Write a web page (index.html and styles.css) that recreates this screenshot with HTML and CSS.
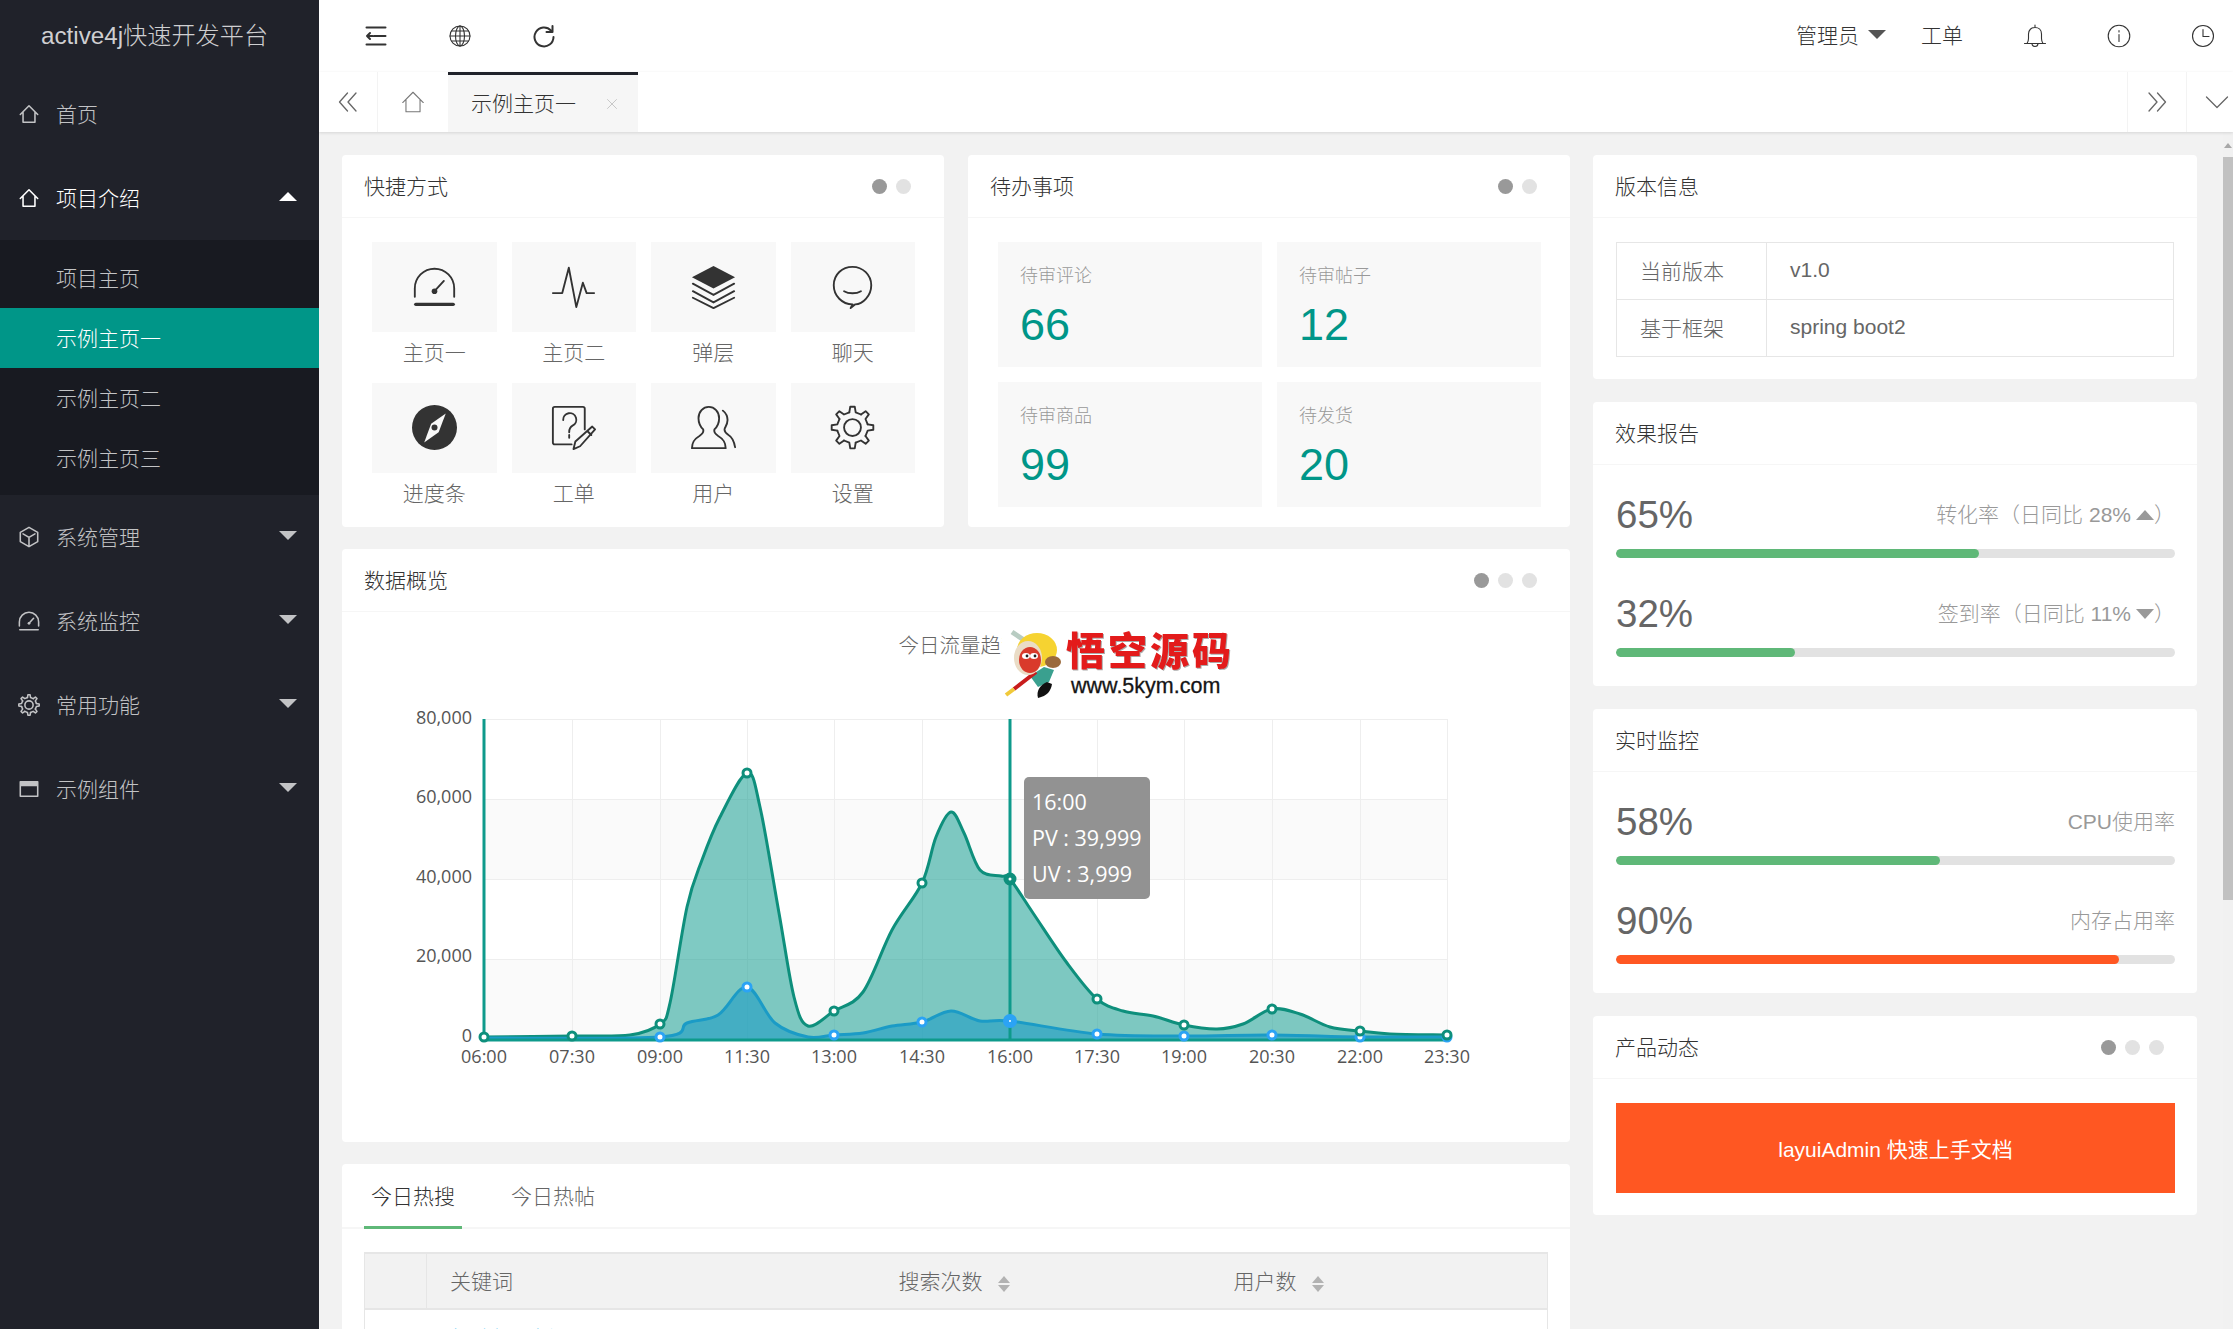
FILE: index.html
```html
<!DOCTYPE html>
<html lang="zh-CN">
<head>
<meta charset="utf-8">
<title>active4j快速开发平台</title>
<link rel="stylesheet" href="styles.css">
</head>
<body>
<svg class="defs" width="0" height="0" aria-hidden="true">
  <symbol id="i-home" viewBox="0 0 24 24"><path d="M2.500 12.500 12 3l9.500 9.500M5.500 10v11h13V10"/></symbol>
  <symbol id="i-fold" viewBox="0 0 24 24"><path d="M2.500 3.500h19M10 12h11.500M2.500 20.500h19M8.500 12H3M6 9 3 12l3 3"/></symbol>
  <symbol id="i-globe" viewBox="0 0 24 24"><circle cx="12" cy="12" r="10"/><ellipse cx="12" cy="12" rx="4.500" ry="10"/><path d="M2 12h20M12 2v20M3.500 7h17M3.500 17h17"/></symbol>
  <symbol id="i-refresh" viewBox="0 0 24 24"><path d="M19 6.500A9.500 9.500 0 1 0 21.500 13"/><path d="M20.500 2v6h-6" /></symbol>
  <symbol id="i-dleft" viewBox="0 0 24 24"><path d="M11.500 3 3.500 12l8 9M20 3l-8 9 8 9"/></symbol>
  <symbol id="i-dright" viewBox="0 0 24 24"><path d="M4 3l8 9-8 9M12.500 3l8 9-8 9"/></symbol>
  <symbol id="i-chev" viewBox="0 0 24 24"><path d="M1.500 7 12 17.500 22.500 7"/></symbol>
  <symbol id="i-close" viewBox="0 0 24 24"><path d="M3 3l18 18M21 3 3 21"/></symbol>
  <symbol id="i-bell" viewBox="0 0 24 24"><path d="M12 1v2.500M1.500 19.500h21M4 19.500c1-1.500 1.500-3 1.500-5V10c0-4 2.800-6.500 6.500-6.500s6.500 2.500 6.500 6.500v4.500c0 2 .5 3.500 1.500 5M9 19.500a3 3 0 0 0 6 0"/></symbol>
  <symbol id="i-info" viewBox="0 0 24 24"><circle cx="12" cy="12" r="10.800"/><path d="M12 10.500v7M12 6.500v1.500"/></symbol>
  <symbol id="i-clock" viewBox="0 0 24 24"><circle cx="12" cy="12" r="10.500"/><path d="M12 5.500v7h6"/></symbol>
  <symbol id="i-gauge" viewBox="0 0 24 24"><path d="M1.500 17.500v-4.500a10.500 10.500 0 0 1 21 0v4.500"/><path class="thick" d="M2 21.500h20"/><path d="M12 14.500 17 9"/><circle class="solid" cx="12" cy="14.500" r="1.500"/></symbol>
  <symbol id="i-pulse" viewBox="0 0 24 24"><path d="M1 15.500h5L9.500 2 13.500 23l3.500-13 2 5.500h4"/></symbol>
  <symbol id="i-layers" viewBox="0 0 24 24"><path class="solid" d="M12 1 23.500 7 12 13 .5 7z"/><path d="M1 10.500l11 6 11-6M1 14.500l11 6 11-6M1 18l11 5.500L23 18"/></symbol>
  <symbol id="i-chat" viewBox="0 0 24 24"><path d="M12 21.500c-5.500 0-10-4.500-10-10.200S6.500 1.500 12 1.500s10 4.300 10 9.800-4.500 10.200-8.500 10.200L11 23.500z"/><path d="M7.500 14.500c2.500 1.500 6.500 1.500 9 0"/></symbol>
  <symbol id="i-compass" viewBox="0 0 24 24"><circle class="solid" cx="12" cy="12" r="12"/><path class="white" d="M18 4.500 14.200 14.500 6.500 20 10.200 10z"/><circle class="solid" cx="12" cy="12" r="1.600"/></symbol>
  <symbol id="i-form" viewBox="0 0 24 24"><path d="M18 13V2a1 1 0 0 0-1-1H2a1 1 0 0 0-1 1v18a1 1 0 0 0 1 1h9"/><path d="M6.500 8a3.500 3.500 0 1 1 5 3c-1.500.8-1.800 1.700-1.800 3.500M9.700 16v1.500"/><path d="M22 11.500l1.500 1.500-8 9-3.500 1.500 1-4zM19.500 14l2 2"/></symbol>
  <symbol id="i-users" viewBox="0 0 24 24"><path d="M9.500 1C6.500 1 4 3.500 4 7c0 2.500 1 4.500 2.500 6 .5 1.500-.5 2.500-2 3.500C2 18 .5 19.500.5 23h18c0-3.500-1.500-5-4-6.500-1.500-1-2.500-2-2-3.500 1.500-1.500 2.500-3.500 2.500-6 0-3.500-2.500-6-5.500-6z"/><path d="M17 3c1.500 1.200 2.500 3 2.500 5s-1 3.500-1.500 4.500c-.5 1.500.5 2.500 2 3.500 2 1.200 3 3.500 3.500 6.500"/></symbol>
  <symbol id="i-gear" viewBox="0 0 24 24">
    <g id="teeth">
      <path d="M10.300 3.900 10.800 .9h2.400l.5 3 2.830 1.170"/>
      <path transform="rotate(45 12 12)" d="M10.300 3.900 10.800 .9h2.400l.5 3 2.830 1.170"/>
      <path transform="rotate(90 12 12)" d="M10.300 3.900 10.800 .9h2.400l.5 3 2.830 1.170"/>
      <path transform="rotate(135 12 12)" d="M10.300 3.900 10.800 .9h2.400l.5 3 2.830 1.170"/>
      <path transform="rotate(180 12 12)" d="M10.300 3.900 10.800 .9h2.400l.5 3 2.830 1.170"/>
      <path transform="rotate(225 12 12)" d="M10.300 3.900 10.800 .9h2.400l.5 3 2.830 1.170"/>
      <path transform="rotate(270 12 12)" d="M10.300 3.900 10.800 .9h2.400l.5 3 2.830 1.170"/>
      <path transform="rotate(315 12 12)" d="M10.300 3.900 10.800 .9h2.400l.5 3 2.830 1.170"/>
    </g>
    <circle cx="12" cy="12" r="4.500"/>
  </symbol>
  <symbol id="i-cube" viewBox="0 0 24 24"><path d="M12 1.500 21.500 7v10L12 22.500 2.500 17V7zM5.500 8.500 12 12.500l6.500-4M12 12.500V21"/></symbol>
  <symbol id="i-window" viewBox="0 0 24 24"><path d="M2.500 4h19v16h-19z"/><rect class="solid" x="2.500" y="4" width="19" height="5"/></symbol>
</svg>

<div class="app">
  <aside class="sidebar">
    <div class="logo">active4j快速开发平台</div>
    <nav>
      <a class="nav-item"><svg class="ico nav-ico"><use href="#i-home"/></svg>首页</a>
      <a class="nav-item is-open"><svg class="ico nav-ico"><use href="#i-home"/></svg>项目介绍<span class="caret caret-up"></span></a>
      <div class="subnav">
        <a class="sub-item">项目主页</a>
        <a class="sub-item is-active">示例主页一</a>
        <a class="sub-item">示例主页二</a>
        <a class="sub-item">示例主页三</a>
      </div>
      <a class="nav-item"><svg class="ico nav-ico"><use href="#i-cube"/></svg>系统管理<span class="caret"></span></a>
      <a class="nav-item"><svg class="ico nav-ico"><use href="#i-gauge"/></svg>系统监控<span class="caret"></span></a>
      <a class="nav-item"><svg class="ico nav-ico"><use href="#i-gear"/></svg>常用功能<span class="caret"></span></a>
      <a class="nav-item"><svg class="ico nav-ico"><use href="#i-window"/></svg>示例组件<span class="caret"></span></a>
    </nav>
  </aside>

  <div class="main">
    <header class="topbar">
      <div class="top-left">
        <svg class="ico top-ico bold"><use href="#i-fold"/></svg>
        <svg class="ico top-ico"><use href="#i-globe"/></svg>
        <svg class="ico top-ico bold"><use href="#i-refresh"/></svg>
      </div>
      <div class="top-right">
        <span class="top-user">管理员<span class="caret caret-dark"></span></span>
        <span class="top-link">工单</span>
        <svg class="ico top-ico"><use href="#i-bell"/></svg>
        <svg class="ico top-ico"><use href="#i-info"/></svg>
        <svg class="ico top-ico"><use href="#i-clock"/></svg>
      </div>
    </header>

    <div class="tabbar">
      <span class="tab-btn tab-prev"><svg class="ico tab-ico"><use href="#i-dleft"/></svg></span>
      <span class="tab-home"><svg class="ico home-ico"><use href="#i-home"/></svg></span>
      <span class="tab-active">示例主页一<svg class="ico close-ico"><use href="#i-close"/></svg></span>
      <span class="tab-space"></span>
      <span class="tab-btn tab-next"><svg class="ico tab-ico"><use href="#i-dright"/></svg></span>
      <span class="tab-btn tab-more"><svg class="ico tab-ico"><use href="#i-chev"/></svg></span>
    </div>

    <div class="body-wrap">
      <main class="content">
        <div class="col-left">
          <div class="row-top">
            <section class="card">
              <div class="card-head">快捷方式<span class="dots"><i class="dot on"></i><i class="dot"></i></span></div>
              <div class="shortcuts">
                <a class="shortcut"><span class="tile"><svg class="ico big-ico"><use href="#i-gauge"/></svg></span>主页一</a>
                <a class="shortcut"><span class="tile"><svg class="ico big-ico"><use href="#i-pulse"/></svg></span>主页二</a>
                <a class="shortcut"><span class="tile"><svg class="ico big-ico"><use href="#i-layers"/></svg></span>弹层</a>
                <a class="shortcut"><span class="tile"><svg class="ico big-ico"><use href="#i-chat"/></svg></span>聊天</a>
                <a class="shortcut"><span class="tile"><svg class="ico big-ico"><use href="#i-compass"/></svg></span>进度条</a>
                <a class="shortcut"><span class="tile"><svg class="ico big-ico"><use href="#i-form"/></svg></span>工单</a>
                <a class="shortcut"><span class="tile"><svg class="ico big-ico"><use href="#i-users"/></svg></span>用户</a>
                <a class="shortcut"><span class="tile"><svg class="ico big-ico"><use href="#i-gear"/></svg></span>设置</a>
              </div>
            </section>
            <section class="card">
              <div class="card-head">待办事项<span class="dots"><i class="dot on"></i><i class="dot"></i></span></div>
              <div class="todos">
                <div class="todo"><h3>待审评论</h3><p>66</p></div>
                <div class="todo"><h3>待审帖子</h3><p>12</p></div>
                <div class="todo"><h3>待审商品</h3><p>99</p></div>
                <div class="todo"><h3>待发货</h3><p>20</p></div>
              </div>
            </section>
          </div>

          <section class="card">
            <div class="card-head">数据概览<span class="dots"><i class="dot on"></i><i class="dot"></i><i class="dot"></i></span></div>
            <svg class="chart" viewBox="342 612 1228 530" width="1228" height="530">
              <rect class="band" x="484" y="799" width="963" height="80"/>
              <rect class="band" x="484" y="959" width="963" height="80"/>
              <path class="grid" d="M484 719.500H1447M484 799.500H1447M484 879.500H1447M484 959.500H1447M572.500 719V1040M660.500 719V1040M747.500 719V1040M834.500 719V1040M922.500 719V1040M1010.500 719V1040M1097.500 719V1040M1184.500 719V1040M1272.500 719V1040M1360.500 719V1040M1447.500 719V1040"/>
              <text class="chart-title" x="960" y="653" text-anchor="middle">今日流量趋势</text>

              <path id="pv-area" class="pv-area"/>
              <path id="uv-area" class="uv-area"/>
              <path id="pv-line" class="pv-line"/>
              <path id="uv-line" class="uv-line"/>
              <path class="axis" d="M484 719V1040H1447M1010 719V1040"/>

              <g class="uv-pts">
                <circle cx="660" cy="1037" r="4"/><circle cx="747" cy="987" r="4"/><circle cx="834" cy="1035" r="4"/><circle cx="922" cy="1022" r="4"/><circle cx="1097" cy="1034" r="4"/><circle cx="1184" cy="1036" r="4"/><circle cx="1272" cy="1035" r="4"/><circle cx="1360" cy="1037" r="4"/><circle cx="1447" cy="1037" r="4"/>
              </g>
              <g class="pv-pts">
                <circle cx="484" cy="1037" r="4"/><circle cx="572" cy="1036" r="4"/><circle cx="660" cy="1024" r="4"/><circle cx="747" cy="773" r="4"/><circle cx="834" cy="1011" r="4"/><circle cx="922" cy="883" r="4"/><circle cx="1097" cy="999" r="4"/><circle cx="1184" cy="1025" r="4"/><circle cx="1272" cy="1009" r="4"/><circle cx="1360" cy="1031" r="4"/><circle cx="1447" cy="1035" r="4"/>
              </g>
              <circle class="pv-hot" cx="1010" cy="879" r="4"/>
              <circle class="uv-hot" cx="1010" cy="1021" r="4"/>

              <g class="tick-y">
                <text x="472" y="724">80,000</text><text x="472" y="803">60,000</text><text x="472" y="883">40,000</text><text x="472" y="962">20,000</text><text x="472" y="1042">0</text>
              </g>
              <g class="tick-x">
                <text x="484" y="1063">06:00</text><text x="572" y="1063">07:30</text><text x="660" y="1063">09:00</text><text x="747" y="1063">11:30</text><text x="834" y="1063">13:00</text><text x="922" y="1063">14:30</text><text x="1010" y="1063">16:00</text><text x="1097" y="1063">17:30</text><text x="1184" y="1063">19:00</text><text x="1272" y="1063">20:30</text><text x="1360" y="1063">22:00</text><text x="1447" y="1063">23:30</text>
              </g>

              <rect class="tip-bg" x="1024" y="777" width="126" height="122" rx="5"/>
              <g class="tip-text">
                <text x="1032" y="810">16:00</text><text x="1032" y="846">PV : 39,999</text><text x="1032" y="882">UV : 3,999</text>
              </g>

              <rect class="wm-bg" x="1002" y="626" width="234" height="76"/>
              <g class="wm-monkey">
                <path class="wm-band" d="M1012 632 1030 644"/>
                <ellipse class="wm-cap" cx="1037" cy="650" rx="20" ry="17"/>
                <ellipse class="wm-ear" cx="1053" cy="662" rx="8" ry="6"/>
                <path class="wm-body" d="M1030 676l14-9 10 3-5 12-11 5z"/>
                <path class="wm-boot" d="M1038 698c-2-7 2-13 9-16l5 2c-1 7-5 12-14 14z"/>
                <path class="wm-staff" d="M1014 689 1036 672"/>
                <path class="wm-tip" d="M1006 695 1014 689"/>
                <ellipse class="wm-skin" cx="1028" cy="658" rx="14" ry="17"/>
                <ellipse class="wm-face" cx="1030" cy="660" rx="11" ry="13"/>
                <ellipse class="wm-eye" cx="1026" cy="656" rx="4" ry="3"/>
                <ellipse class="wm-eye" cx="1034" cy="656" rx="4" ry="3"/>
                <circle class="wm-dot" cx="1027" cy="656" r="1.400"/>
                <circle class="wm-dot" cx="1035" cy="656" r="1.400"/>
              </g>
              <text class="wm-cn" x="1066" y="665">悟空源码</text>
              <text class="wm-en" x="1071" y="693">www.5kym.com</text>
            </svg>
          </section>

          <section class="card">
            <div class="hot-tabs"><span class="hot-tab is-on">今日热搜</span><span class="hot-tab">今日热帖</span></div>
            <div class="hot-body">
              <table class="hot-table">
                <thead>
                  <tr>
                    <th class="c-idx"></th>
                    <th class="c-key">关键词</th>
                    <th class="c-num">搜索次数<span class="sort"></span></th>
                    <th>用户数<span class="sort"></span></th>
                  </tr>
                </thead>
                <tbody>
                  <tr><td></td><td class="link">胡歌新剧播</td><td></td><td></td></tr>
                </tbody>
              </table>
            </div>
          </section>
        </div>

        <div class="col-right">
          <section class="card">
            <div class="card-head">版本信息</div>
            <div class="ver-body">
              <table class="ver-table">
                <tr><td class="ver-k">当前版本</td><td>v1.0</td></tr>
                <tr><td class="ver-k">基于框架</td><td>spring boot2</td></tr>
              </table>
            </div>
          </section>
          <section class="card">
            <div class="card-head">效果报告</div>
            <div class="meters">
              <div class="meter">
                <div class="meter-top"><b>65%</b><span>转化率（日同比 28%<i class="tri tri-up"></i>）</span></div>
                <div class="bar"><div class="fill fill-green" style="width:65%"></div></div>
              </div>
              <div class="meter">
                <div class="meter-top"><b>32%</b><span>签到率（日同比 11%<i class="tri tri-down"></i>）</span></div>
                <div class="bar"><div class="fill fill-green" style="width:32%"></div></div>
              </div>
            </div>
          </section>
          <section class="card">
            <div class="card-head">实时监控</div>
            <div class="meters">
              <div class="meter">
                <div class="meter-top"><b>58%</b><span>CPU使用率</span></div>
                <div class="bar"><div class="fill fill-green" style="width:58%"></div></div>
              </div>
              <div class="meter">
                <div class="meter-top"><b>90%</b><span>内存占用率</span></div>
                <div class="bar"><div class="fill fill-red" style="width:90%"></div></div>
              </div>
            </div>
          </section>
          <section class="card">
            <div class="card-head">产品动态<span class="dots"><i class="dot on"></i><i class="dot"></i><i class="dot"></i></span></div>
            <div class="news"><a class="news-banner">layuiAdmin 快速上手文档</a></div>
          </section>
        </div>
      </main>
      <div class="scrollbar"><span class="scroll-up"></span><span class="scroll-thumb"></span></div>
    </div>
  </div>
</div>
<script src="chart.js"></script>
</body>
</html>
```

FILE: styles.css
```css
* { box-sizing: border-box; }
html, body { margin: 0; height: 100%; overflow: hidden; }
body {
  font-family: "Liberation Sans", "Noto Sans CJK SC", sans-serif;
  font-size: 21px;
  font-weight: 300;
  color: #666;
  background: #f2f2f2;
}
.defs { position: absolute; }

.ico { fill: none; stroke: currentColor; stroke-width: 1.4; stroke-linejoin: round; stroke-linecap: round; display: block; flex: none; }
.solid { fill: currentColor; stroke: none; }
.white { fill: #f8f8f8; stroke: none; }
.thick { stroke-width: 1.8; }

.app { display: flex; height: 1329px; }

/* sidebar */
.sidebar { width: 319px; flex: none; background: #20222a; color: #c2c3c5; }
.logo { height: 72px; padding: 0 0 5px 41px; display: flex; align-items: center; font-size: 24.2px; color: #cfcfd1; }
.nav-item { height: 84px; display: flex; align-items: center; padding: 0 0 3px 18px; }
.nav-item.is-open { color: #fff; }
.nav-ico { width: 22px; height: 22px; margin: 3px 16px 0 0; stroke-width: 1.7; }
.caret { width: 0; height: 0; border: 9px solid transparent; border-top: 9px solid #c2c3c5; border-bottom: 0; margin-left: auto; margin-right: 22px; }
.caret-up { border-top: 0; border-bottom: 9px solid #fff; }
.subnav { background: #181a21; padding: 8px 0 7px; }
.sub-item { display: flex; align-items: center; height: 60px; padding: 0 0 3px 56px; }
.sub-item.is-active { background: #009688; color: #fff; }

/* header */
.main { flex: 1; min-width: 0; display: flex; flex-direction: column; }
.topbar { height: 72px; flex: none; background: #fff; display: flex; justify-content: space-between; align-items: center; color: #333; }
.top-left { display: flex; gap: 60px; padding-left: 45px; }
.top-right { display: flex; align-items: center; gap: 60px; padding-right: 18px; }
.top-ico { width: 24px; height: 24px; stroke-width: 1.1; }
.top-ico.bold { stroke-width: 2; }
.top-user { display: flex; align-items: center; padding-bottom: 4px; margin-right: -25px; }
.caret-dark { border-top-color: #555; margin: 0 0 0 9px; }
.top-link { padding-bottom: 4px; }

.tabbar { height: 60px; flex: none; background: #fff; display: flex; box-shadow: 0 1px 3px rgba(0,0,0,.12); position: relative; }
.tab-btn { display: flex; align-items: center; justify-content: center; color: #666; }
.tab-prev { width: 59px; border-right: 1px solid #f3f3f3; }
.tab-next { width: 59px; border-left: 1px solid #f3f3f3; }
.tab-more { width: 47px; border-left: 1px solid #f3f3f3; padding-left: 13px; }
.tab-ico { width: 24px; height: 24px; stroke-width: 1.3; }
.tab-home { width: 70px; display: flex; align-items: center; justify-content: center; color: #777; }
.home-ico { width: 26px; height: 26px; stroke-width: 1; }
.tab-active { width: 190px; background: #f6f6f6; border-top: 3px solid #20222a; padding: 0 0 4px 23px; display: flex; align-items: center; color: #333; }
.close-ico { width: 12px; height: 12px; margin-left: 30px; color: #c8c8c8; stroke-width: 2; margin-top: 4px; }
.tab-space { flex: 1; }

/* content */
.body-wrap { flex: 1; min-height: 0; display: flex; }
.content { flex: 1; min-width: 0; overflow: hidden; padding: 23px 26px 0 23px; display: grid; grid-template-columns: 1228px 604px; gap: 23px; align-items: start; }
.col-left { display: flex; flex-direction: column; gap: 22px; }
.col-right { display: flex; flex-direction: column; gap: 23px; }
.row-top { display: grid; grid-template-columns: 602px 602px; gap: 24px; }
.card { background: #fff; border-radius: 4px; }
.card-head { height: 63px; padding: 0 33px 2px 22px; display: flex; align-items: center; justify-content: space-between; color: #333; border-bottom: 1px solid #f6f6f6; }
.dots { display: flex; gap: 9px; margin-top: 2px; }
.dot { width: 15px; height: 15px; border-radius: 50%; background: #e2e2e2; }
.dot.on { background: #999; }

.shortcuts { display: grid; grid-template-columns: repeat(4, 1fr); column-gap: 15px; padding: 24px 29px 3px 30px; }
.shortcut { height: 141px; display: flex; flex-direction: column; align-items: center; }
.tile { width: 100%; height: 90px; background: #f8f8f8; display: flex; align-items: center; justify-content: center; color: #333; margin-bottom: 4px; }
.big-ico { width: 45px; height: 45px; stroke-width: 1; margin-top: -2px; }

.todos { display: grid; grid-template-columns: 1fr 1fr; gap: 15px; padding: 24px 29px 20px 30px; }
.todo { height: 125px; background: #f8f8f8; padding: 20px 22px; }
.todo h3 { margin: 0; font-size: 18px; line-height: 28px; font-weight: 300; color: #999; }
.todo p { margin: 0; font-size: 45px; line-height: 58px; color: #009688; margin-top: 6px; }

/* chart */
.chart { display: block; }
.band { fill: #fafafa; }
.grid { fill: none; stroke: #eee; stroke-width: 1; }
.chart-title { font-size: 20.5px; fill: #666; font-family: "Noto Sans CJK SC", sans-serif; }
.pv-area { fill: #009688; fill-opacity: .5; }
.uv-area { fill: #1e9cc5; fill-opacity: .6; }
.pv-line { fill: none; stroke: #0e8f7c; stroke-width: 3; }
.uv-line { fill: none; stroke: #1b9bc6; stroke-width: 3; }
.axis { fill: none; stroke: #0e9a8b; stroke-width: 3; }
.pv-pts circle { fill: #fff; stroke: #0e8f7c; stroke-width: 3; }
.uv-pts circle { fill: #fff; stroke: #2ba3f5; stroke-width: 3; }
.pv-hot { fill: #fff; stroke: #0e8f7c; stroke-width: 5; }
.uv-hot { fill: #fff; stroke: #2ba3f5; stroke-width: 6; }
.tick-y text, .tick-x text { font-family: "Open Sans", sans-serif; font-size: 18px; fill: #555; font-weight: 400; }
.tick-y text { text-anchor: end; }
.tick-x text { text-anchor: middle; }
.tip-bg { fill: #929292; }
.tip-text text { font-family: "Open Sans", sans-serif; font-size: 21.5px; fill: #fff; font-weight: 400; }
.wm-bg { fill: #fff; }
.wm-cn { font-family: "Noto Sans CJK SC", sans-serif; font-weight: 900; font-size: 39px; letter-spacing: 3px; fill: #e31b1b; filter: drop-shadow(1px 1px 0 #aaa); }
.wm-en { font-family: "Liberation Sans", sans-serif; font-size: 21.5px; fill: #151515; font-weight: 400; stroke: #151515; stroke-width: .3; }
.wm-staff { stroke: #c81c1c; stroke-width: 4; fill: none; }
.wm-tip { stroke: #f0c93a; stroke-width: 4; fill: none; }
.wm-boot { fill: #111; }
.wm-body { fill: #3aa08f; }
.wm-band { stroke: #b8ccc2; stroke-width: 5; fill: none; }
.wm-cap { fill: #f6d331; }
.wm-ear { fill: #9b6a3c; }
.wm-skin { fill: #eadcc6; }
.wm-face { fill: #d93a2b; }
.wm-eye { fill: #fff; }
.wm-dot { fill: #222; }

/* hot */
.hot-tabs { height: 65px; display: flex; padding-left: 22px; border-bottom: 2px solid #f6f6f6; }
.hot-tab { width: 98px; height: 65px; display: flex; align-items: center; justify-content: center; padding-bottom: 4px; color: #666; margin-right: 42px; }
.hot-tab.is-on { color: #333; border-bottom: 3px solid #5fb878; padding-bottom: 1px; }
.hot-body { padding: 23px 22px 40px; }
.hot-table { width: 100%; border-collapse: collapse; table-layout: fixed; border: 1px solid #e6e6e6; }
.hot-table th { height: 56px; background: #f2f2f2; text-align: left; font-weight: 300; padding: 0 0 3px 23px; border-top: 2px solid #e6e6e6; border-bottom: 2px solid #e6e6e6; }
.hot-table td { height: 56px; padding: 0 0 0 23px; }
.c-idx { width: 62px; border-right: 1px solid #e6e6e6; }
.c-key { width: 449px; }
.c-num { width: 335px; }
.link { color: #01aaed; }
.sort { display: inline-block; vertical-align: -2px; margin-left: 15px; width: 0; height: 0; border: 6px solid transparent; border-bottom: 7px solid #b2b2b2; position: relative; top: -8px; }
.sort::after { content: ""; position: absolute; left: -6px; top: 9px; width: 0; height: 0; border: 6px solid transparent; border-top: 7px solid #b2b2b2; border-bottom: 0; }

/* right column */
.ver-body { padding: 24px 23px 22px 23px; }
.ver-table { width: 100%; border-collapse: collapse; border: 1px solid #e6e6e6; }
.ver-table td { height: 57px; padding: 0 0 3px 23px; border: 1px solid #e6e6e6; }
.ver-k { width: 150px; }
.meters { padding: 30px 22px 29px 23px; display: flex; flex-direction: column; gap: 36px; }
.meter-top { height: 40px; display: flex; justify-content: space-between; align-items: center; margin-bottom: 14px; }
.meter-top b { font-size: 38.5px; font-weight: 400; color: #666; }
.meter-top span { color: #999; padding-bottom: 4px; }
.tri { display: inline-block; width: 0; height: 0; margin-left: 5px; border: 9.5px solid transparent; vertical-align: 2px; }
.tri-up { border-top: 0; border-bottom: 10px solid #999; }
.tri-down { border-bottom: 0; border-top: 10px solid #999; }
.bar { height: 9px; border-radius: 5px; background: #e2e2e2; overflow: hidden; }
.fill { height: 100%; border-radius: 5px; }
.fill-green { background: #5fb878; }
.fill-red { background: #ff5722; }
.news { padding: 24px 22px 22px 23px; }
.news-banner { height: 90px; background: #ff5722; color: #fff; display: flex; align-items: center; justify-content: center; font-weight: 400; }

/* scrollbar */
.scrollbar { width: 10px; flex: none; background: #f1f1f1; display: flex; flex-direction: column; align-items: center; padding-top: 11px; }
.scroll-up { width: 0; height: 0; border: 4px solid transparent; border-top: 0; border-bottom: 5px solid #a8a8a8; margin-bottom: 9px; }
.scroll-thumb { width: 10px; height: 743px; background: #c1c1c1; }
```

FILE: chart.js
```js
// Catmull-Rom spline through the sampled series of the traffic chart.
var BASE = 1039;
var PV = [[484,1037],[572,1036],[630,1035],[660,1024],[670,1003],[687,907],[702,860],[720,817],[747,773],[760,807],[779,913],[794,997],[808,1026],[834,1011],[863,992],[892,930],[922,883],[936,837],[951,812],[964,833],[980,870],[1001,876],[1010,879],[1033,913],[1067,963],[1097,999],[1123,1011],[1153,1016],[1184,1025],[1217,1029],[1243,1024],[1272,1009],[1300,1014],[1330,1027],[1360,1031],[1390,1034],[1447,1035]];
var UV = [[484,1038],[660,1037],[687,1023],[718,1015],[747,987],[775,1023],[808,1037],[834,1035],[863,1033],[892,1026],[922,1022],[951,1011],[980,1021],[1010,1021],[1097,1034],[1184,1036],[1272,1035],[1360,1037],[1447,1037]];

function spline(p) {
  var d = 'M' + p[0][0] + ' ' + p[0][1];
  for (var i = 0; i < p.length - 1; i++) {
    var a = p[Math.max(i - 1, 0)], b = p[i], c = p[i + 1], e = p[Math.min(i + 2, p.length - 1)];
    var c1x = b[0] + (c[0] - a[0]) / 6, c1y = b[1] + (c[1] - a[1]) / 6;
    var c2x = c[0] - (e[0] - b[0]) / 6, c2y = c[1] - (e[1] - b[1]) / 6;
    d += 'C' + c1x.toFixed(1) + ' ' + c1y.toFixed(1) + ' ' + c2x.toFixed(1) + ' ' + c2y.toFixed(1) + ' ' + c[0] + ' ' + c[1];
  }
  return d;
}

function draw(name, data) {
  var line = spline(data);
  document.getElementById(name + '-line').setAttribute('d', line);
  document.getElementById(name + '-area').setAttribute('d', line + 'L' + data[data.length - 1][0] + ' ' + BASE + 'L' + data[0][0] + ' ' + BASE + 'Z');
}

draw('pv', PV);
draw('uv', UV);
```
